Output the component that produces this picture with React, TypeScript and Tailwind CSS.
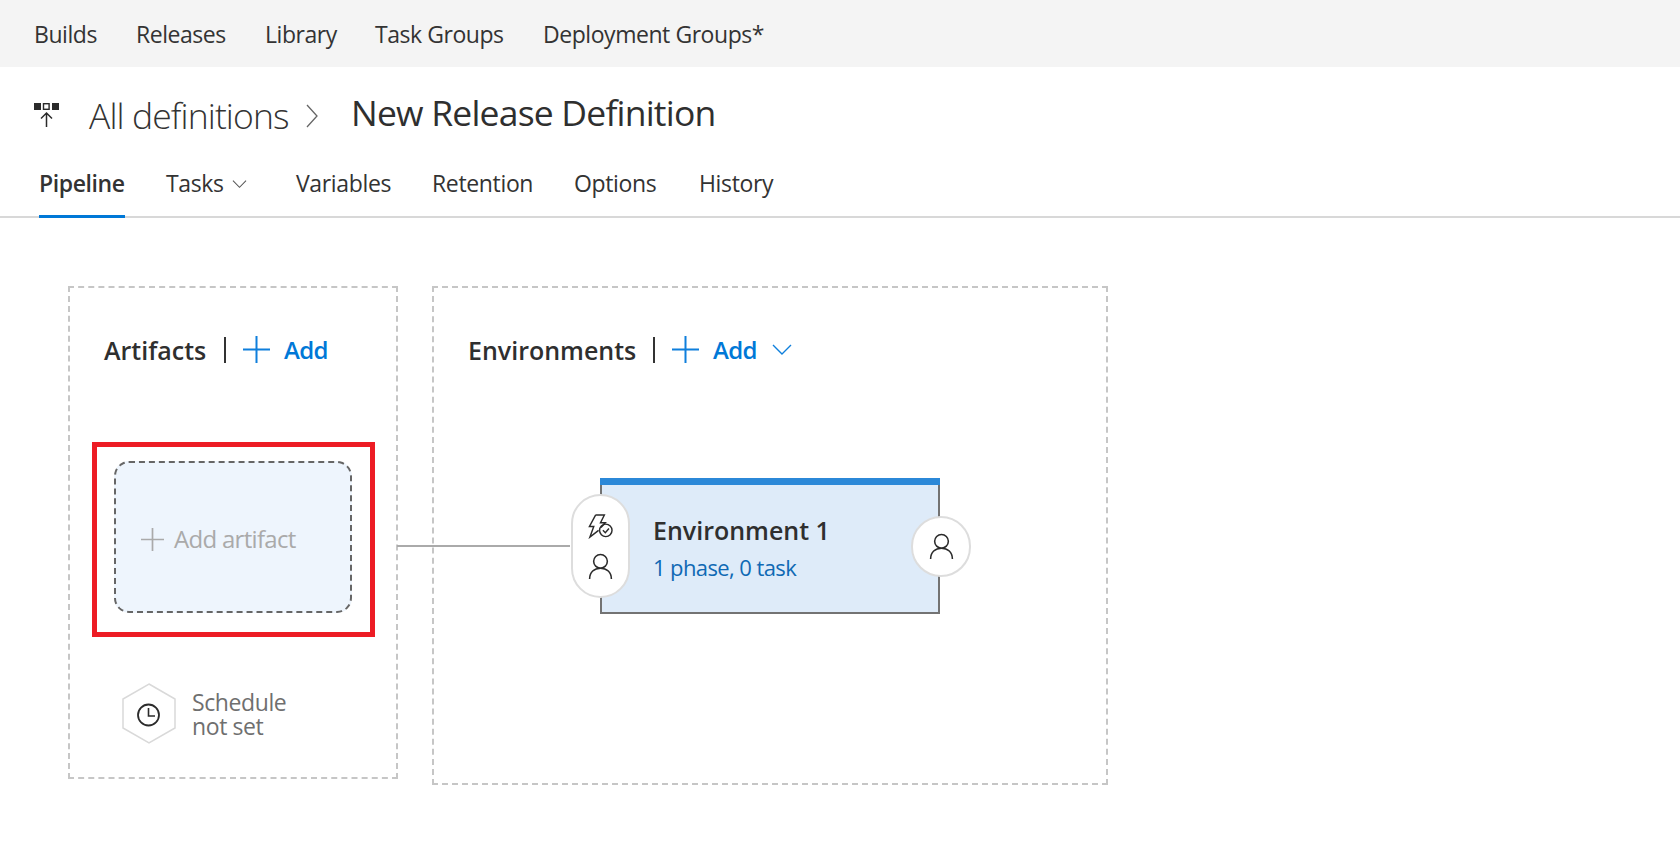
const font = "[font-family:'Open_Sans','Noto_Sans',sans-serif]";

function Plus({ className }: { className: string }) {
  return (
    <svg viewBox="0 0 27 27" className={className} fill="none" stroke="currentColor" strokeWidth="2">
      <path d="M13.5 0V27M0 13.5H27" />
    </svg>
  );
}

function Chevron({ className }: { className: string }) {
  return (
    <svg viewBox="0 0 20 11" className={className} fill="none" stroke="currentColor" strokeWidth="1.4">
      <path d="M1 1L10 10L19 1" />
    </svg>
  );
}

function Person({ className }: { className: string }) {
  return (
    <svg viewBox="0 0 24 26" className={className} fill="none" stroke="#2b2b2b" strokeWidth="1.5">
      <circle cx="12" cy="8" r="6.6" />
      <path d="M1.5 25C1.5 18.5 6 14.6 12 14.6S22.5 18.5 22.5 25" />
    </svg>
  );
}

function Section({ title, caret, w }: { title: string; caret?: boolean; w: string }) {
  return (
    <div className="flex items-center h-[27px]">
      <span className={`${w} text-[25px] font-semibold text-[#2f2f2f] leading-[27px] mt-[2px]`}>{title}</span>
      <span className="w-[2px] h-[26px] bg-[#333333]" />
      <Plus className="w-[27px] h-[27px] ml-[17px] text-[#0f7fdc]" />
      <span className="ml-[14px] text-[24px] font-semibold text-[#0078d7] leading-[27px] tracking-[-0.6px]">Add</span>
      {caret && <Chevron className="w-[20px] h-[11px] ml-[15px] text-[#0f7fdc]" />}
    </div>
  );
}

export default function App() {
  return (
    <div className={`${font} w-[1680px] h-[858px] bg-white overflow-hidden relative`}>
      <nav className="h-[67px] bg-[#f4f4f4] flex items-center pl-[34px] pt-[2px] text-[23px] text-[#333333] tracking-[-0.45px]">
        <span className="w-[102px]">Builds</span>
        <span className="w-[129px]">Releases</span>
        <span className="w-[110px]">Library</span>
        <span className="w-[168px]">Task Groups</span>
        <span>Deployment Groups*</span>
      </nav>

      <header className="h-[82px] flex items-start pl-[34px]">
        <svg viewBox="0 0 26 26" className="w-[26px] h-[26px] mt-[36px]" fill="none">
          <rect x="0" y="0" width="7" height="7" fill="#2b2b2b" />
          <rect x="9.5" y="0.7" width="5.6" height="5.6" stroke="#2b2b2b" strokeWidth="1.4" />
          <rect x="18" y="0" width="7" height="7" fill="#2b2b2b" />
          <path d="M12.5 24V10M7 15.5L12.5 10L18 15.5" stroke="#2b2b2b" strokeWidth="1.5" />
        </svg>
        <span className="ml-[29px] text-[35.5px] font-light text-[#333333] tracking-[-0.9px] mt-[24px] leading-[48px] w-[216px] whitespace-nowrap">All definitions</span>
        <svg viewBox="0 0 12 24" className="w-[12px] h-[24px] mt-[37px] ml-[1px]" fill="none" stroke="#666666" strokeWidth="1.3">
          <path d="M1 1L11 12L1 23" />
        </svg>
        <span className="ml-[33px] text-[35.5px] text-[#2f2f2f] tracking-[-0.8px] mt-[21px] leading-[48px]">New Release Definition</span>
      </header>

      <div className="h-[69px] flex items-start pl-[39px] border-b-2 border-[#d8d8d8] text-[23px] text-[#333333] tracking-[-0.35px] relative">
        <span className="w-[127px] h-[69px] pt-[17px] relative font-semibold tracking-[-0.4px]">
          Pipeline
          <span className="absolute left-0 bottom-0 w-[86px] h-[3px] bg-[#0078d7]" />
        </span>
        <span className="w-[66px] pt-[17px]">Tasks</span>
        <span className="w-[64px] pt-[31px]">
          <Chevron className="w-[15px] h-[8px] text-[#555555]" />
        </span>
        <span className="w-[136px] pt-[17px]">Variables</span>
        <span className="w-[142px] pt-[17px]">Retention</span>
        <span className="w-[125px] pt-[17px]">Options</span>
        <span className="pt-[17px]">History</span>
      </div>

      <main className="flex items-start pl-[68px] pt-[68px] gap-[34px] relative">
        <section className="w-[330px] h-[493px] border-2 border-dashed border-[#c6c6c6] pl-[34px] pt-[48px]">
          <Section title="Artifacts" w="w-[120px]" />
          <div className="w-[283px] h-[195px] -ml-[12px] mt-[79px] border-[5px] border-[#ed1c24] pl-[17px] pt-[14px]">
            <div className="w-[238px] h-[152px] rounded-[15px] border-2 border-dashed border-[#666666] bg-[#eef5fd] flex items-center pl-[25px] pt-[4px]">
              <Plus className="w-[23px] h-[23px] text-[#aaaaaa]" />
              <span className="ml-[10px] text-[24px] text-[#aaaaaa] tracking-[-0.7px]">Add artifact</span>
            </div>
          </div>
          <div className="flex items-center ml-[18px] mt-[46px]">
            <svg viewBox="0 0 54 61" className="w-[54px] h-[61px]" fill="none">
              <path d="M27 1L53 16V45L27 60L1 45V16Z" stroke="#d9d9d9" strokeWidth="1.5" />
              <circle cx="26.5" cy="32" r="10.5" stroke="#2b2b2b" strokeWidth="1.8" />
              <path d="M26.5 25V33H33" stroke="#2b2b2b" strokeWidth="1.6" />
            </svg>
            <div className="ml-[16px] text-[23px] leading-[24px] text-[#6f6f6f] tracking-[-0.4px]">
              Schedule
              <br />
              not set
            </div>
          </div>
        </section>

        <section className="w-[676px] h-[499px] border-2 border-dashed border-[#c6c6c6] pl-[34px] pt-[48px]">
          <Section title="Environments" w="w-[185px]" caret />
        </section>

        <div className="absolute left-[397px] top-[327px] w-[173px] h-[2px] bg-[#aaaaaa]" />

        <div className="absolute left-[600px] top-[260px] w-[340px] h-[136px] bg-[#deebf9] border-x-2 border-b-2 border-[#737373] border-t-0 pl-[51px]">
          <div className="absolute -left-[2px] -right-[2px] top-0 h-[7px] bg-[#2b88d8]" />
          <div className="pt-[36px] text-[25px] font-semibold leading-[32px] text-[#2f2f2f]">Environment 1</div>
          <div className="mt-[6px] text-[22px] leading-[30px] text-[#0f69b4] tracking-[-0.6px]">1 phase, 0 task</div>
        </div>

        <div className="absolute left-[571px] top-[276px] w-[59px] h-[104px] rounded-[30px] bg-white border-2 border-[#dddddd] flex flex-col items-center pt-[18px] gap-[14px]">
          <svg viewBox="0 0 26 26" className="w-[25px] h-[25px]" fill="none" stroke="#2b2b2b" strokeWidth="1.5">
            <path d="M8 1H17L13 9H18L13.5 14M11 17L2 24L6 13H1.5L8 1" />
            <circle cx="18.5" cy="17" r="6.5" />
            <path d="M15.5 17L18 19.5L21.8 15" />
          </svg>
          <Person className="w-[25px] h-[27px]" />
        </div>

        <div className="absolute left-[911px] top-[298px] w-[60px] h-[61px] rounded-full bg-white border-2 border-[#dddddd] flex items-center justify-center">
          <Person className="w-[25px] h-[27px]" />
        </div>
      </main>
    </div>
  );
}
